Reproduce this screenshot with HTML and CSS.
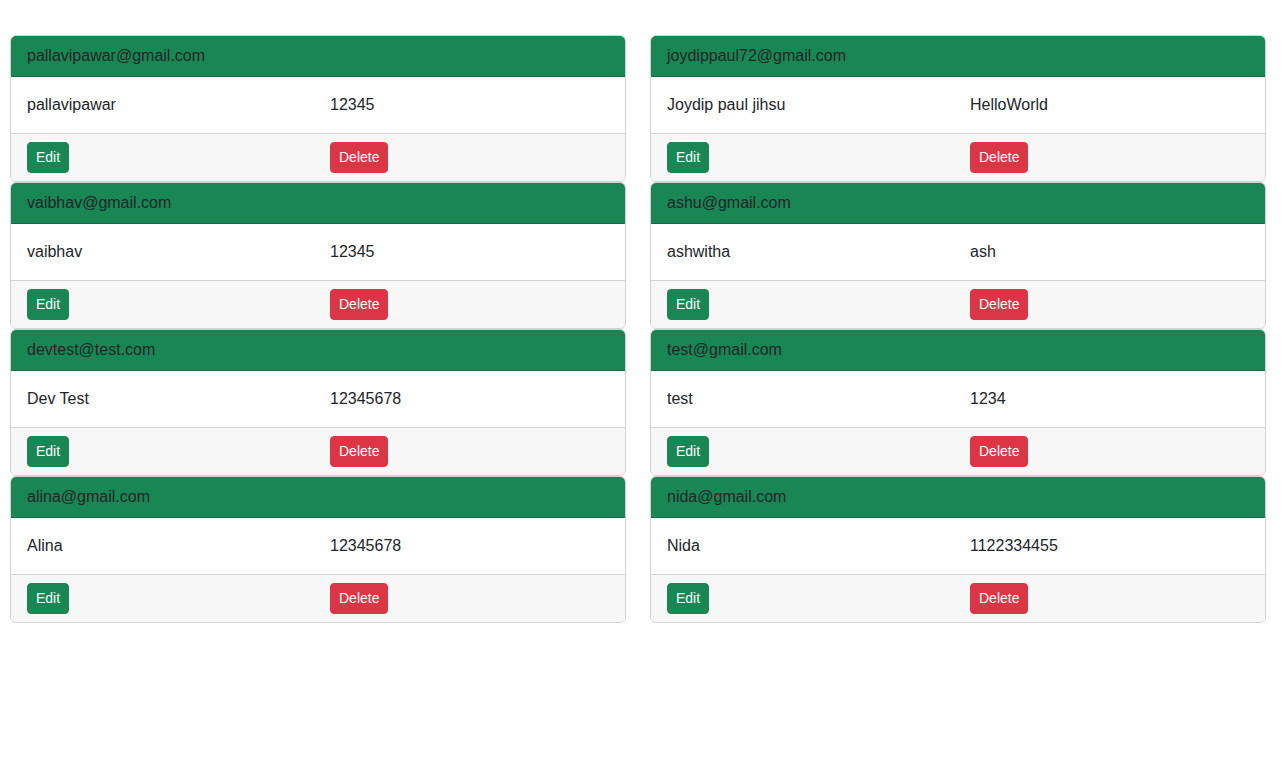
FILE: index.html
```html
<!DOCTYPE html>
<html lang="en">
<head>
<meta charset="utf-8">
<title>Users</title>
<link rel="stylesheet" href="styles.css">
</head>
<body>
<main class="grid">
  <section class="column">
    <div class="card">
      <div class="card-header">pallavipawar@gmail.com</div>
      <div class="card-body"><span>pallavipawar</span><span>12345</span></div>
      <div class="card-footer"><div><button class="btn btn-edit">Edit</button></div><div><button class="btn btn-delete">Delete</button></div></div>
    </div>
    <div class="card">
      <div class="card-header">vaibhav@gmail.com</div>
      <div class="card-body"><span>vaibhav</span><span>12345</span></div>
      <div class="card-footer"><div><button class="btn btn-edit">Edit</button></div><div><button class="btn btn-delete">Delete</button></div></div>
    </div>
    <div class="card">
      <div class="card-header">devtest@test.com</div>
      <div class="card-body"><span>Dev Test</span><span>12345678</span></div>
      <div class="card-footer"><div><button class="btn btn-edit">Edit</button></div><div><button class="btn btn-delete">Delete</button></div></div>
    </div>
    <div class="card">
      <div class="card-header">alina@gmail.com</div>
      <div class="card-body"><span>Alina</span><span>12345678</span></div>
      <div class="card-footer"><div><button class="btn btn-edit">Edit</button></div><div><button class="btn btn-delete">Delete</button></div></div>
    </div>
  </section>
  <section class="column">
    <div class="card">
      <div class="card-header">joydippaul72@gmail.com</div>
      <div class="card-body"><span>Joydip paul jihsu</span><span>HelloWorld</span></div>
      <div class="card-footer"><div><button class="btn btn-edit">Edit</button></div><div><button class="btn btn-delete">Delete</button></div></div>
    </div>
    <div class="card">
      <div class="card-header">ashu@gmail.com</div>
      <div class="card-body"><span>ashwitha</span><span>ash</span></div>
      <div class="card-footer"><div><button class="btn btn-edit">Edit</button></div><div><button class="btn btn-delete">Delete</button></div></div>
    </div>
    <div class="card">
      <div class="card-header">test@gmail.com</div>
      <div class="card-body"><span>test</span><span>1234</span></div>
      <div class="card-footer"><div><button class="btn btn-edit">Edit</button></div><div><button class="btn btn-delete">Delete</button></div></div>
    </div>
    <div class="card">
      <div class="card-header">nida@gmail.com</div>
      <div class="card-body"><span>Nida</span><span>1122334455</span></div>
      <div class="card-footer"><div><button class="btn btn-edit">Edit</button></div><div><button class="btn btn-delete">Delete</button></div></div>
    </div>
  </section>
</main>
</body>
</html>
```
FILE: styles.css
```css
* { box-sizing: border-box; }
html, body { margin: 0; padding: 0; background: #fff; }
body {
  font-family: "Segoe UI", "Liberation Sans", Arial, sans-serif;
  font-size: 16px;
  line-height: 24px;
  color: #212529;
}
.grid {
  display: grid;
  grid-template-columns: 616px 616px;
  column-gap: 24px;
  padding: 35px 0 0 10px;
}
.column { display: flex; flex-direction: column; }
.card {
  border: 1px solid #d3d3d4;
  border-radius: 6px;
  overflow: hidden;
  background: #fff;
}
.card-header {
  background: #198754;
  padding: 8px 16px;
  border-bottom: 1px solid #166c45;
}
.card-body,
.card-footer {
  display: grid;
  grid-template-columns: 1fr 1fr;
  column-gap: 24px;
  padding: 16px;
}
.card-footer {
  padding: 8px 16px;
  background: #f7f7f7;
  border-top: 1px solid #d3d3d4;
}
.btn {
  font-family: inherit;
  font-size: 14px;
  line-height: 21px;
  padding: 4px 8px;
  border: 1px solid transparent;
  border-radius: 4px;
  color: #fff;
  height: 31px;
}
.btn-edit { background: #198754; border-color: #198754; }
.btn-delete { background: #dc3545; border-color: #dc3545; }
```
